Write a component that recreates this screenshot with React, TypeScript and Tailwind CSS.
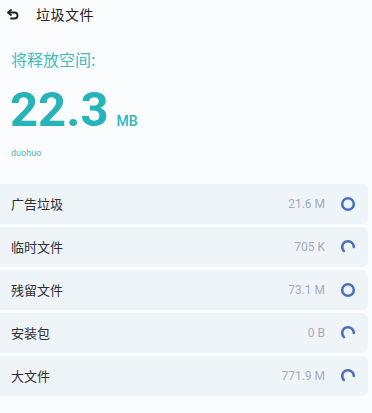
const ROWS = [
  { name: "广告垃圾", size: "21.6 M", done: true },
  { name: "临时文件", size: "705 K", done: false },
  { name: "残留文件", size: "73.1 M", done: true },
  { name: "安装包", size: "0 B", done: false },
  { name: "大文件", size: "771.9 M", done: false },
];

function BackIcon() {
  return (
    <svg width="12" height="11" viewBox="0 0 12 11" fill="none">
      <path d="M4 1 1 3.5 4 6" stroke="#222" strokeWidth="1.8" strokeLinecap="round" strokeLinejoin="round" />
      <path d="M1.5 3.5H7.5a3 3 0 0 1 0 6H4" stroke="#222" strokeWidth="1.8" strokeLinecap="round" />
    </svg>
  );
}

function StatusIcon({ done }: { done: boolean }) {
  return (
    <svg width="16" height="16" viewBox="0 0 16 16" fill="none">
      {done ? (
        <circle cx="8" cy="8" r="5.8" stroke="#4c70c0" strokeWidth="2.5" />
      ) : (
        <path d="M13.8 8A5.8 5.8 0 1 0 3.9 12.1" stroke="#4c70c0" strokeWidth="2.5" strokeLinecap="round" />
      )}
    </svg>
  );
}

export default function App() {
  return (
    <div className="w-[372px] h-[413px] bg-[#fbfcfd] overflow-hidden">
      <div className="flex items-center h-[28px] pl-[7px]">
        <BackIcon />
        <span className="ml-[17px] text-[14px] text-[#222] tracking-[0.5px] font-['Noto_Sans_CJK_SC',sans-serif]">
          垃圾文件
        </span>
      </div>

      <div className="pl-[11px] mt-[21px] text-[16px] leading-[20px] text-[#3dbec3] font-['Noto_Sans_CJK_SC',sans-serif]">
        将释放空间:
      </div>

      <div className="pl-[10px] mt-[19px] flex items-baseline h-[44px] font-['Roboto',sans-serif]">
        <span className="text-[49px] leading-[44px] font-bold text-[#26b4b9]">22.3</span>
        <span className="ml-[8px] text-[14px] font-medium text-[#2fb6bb]">MB</span>
      </div>

      <div className="pl-[11px] mt-[15px] text-[9px] leading-[12px] text-[#4bb6c2] font-['Roboto',sans-serif]">
        duohuo
      </div>

      <div className="mt-[25px] flex flex-col gap-[3px] mr-[4px]">
        {ROWS.map((row) => (
          <div key={row.name} className="flex items-center h-[40px] bg-[#eff4f9] rounded-r-[6px] pl-[11px] pr-[12px]">
            <span className="flex-1 text-[13px] text-[#2e2e2e] font-['Noto_Sans_CJK_SC',sans-serif]">
              {row.name}
            </span>
            <span className="text-[12px] text-[#a3adbb] mr-[15px] font-['Roboto',sans-serif]">
              {row.size}
            </span>
            <StatusIcon done={row.done} />
          </div>
        ))}
      </div>
    </div>
  );
}
